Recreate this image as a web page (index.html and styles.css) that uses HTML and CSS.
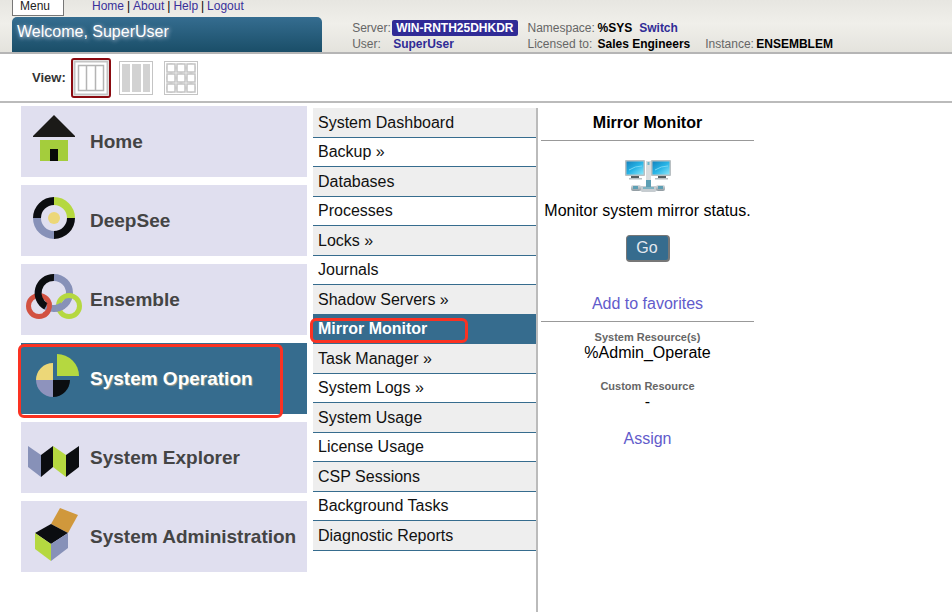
FILE: index.html
```html
<!DOCTYPE html>
<html lang="en">
<head>
<meta charset="utf-8">
<title>Management Portal</title>
<link rel="stylesheet" href="styles.css">
</head>
<body>
<header class="masthead">
  <div class="topbar">
    <button class="menu-button" type="button">Menu</button>
    <nav class="toplinks">
      <a href="#">Home</a><span class="sep">|</span><a href="#">About</a><span class="sep">|</span><a href="#">Help</a><span class="sep">|</span><a href="#">Logout</a>
    </nav>
  </div>
  <div class="banner-row">
    <h1 class="welcome">Welcome, SuperUser</h1>
    <div class="info">
      <div class="info-group info-server">
        <div class="info-line"><span class="label">Server:</span><b class="badge">WIN-RNTH25DHKDR</b></div>
        <div class="info-line"><span class="label">User:</span><b class="user">SuperUser</b></div>
      </div>
      <div class="info-group info-license">
        <div class="info-line"><span class="label">Namespace:</span><b>%SYS</b><a class="switch" href="#">Switch</a></div>
        <div class="info-line"><span class="label">Licensed to:</span><b>Sales Engineers</b></div>
      </div>
      <div class="info-group info-instance">
        <div class="info-line"><span class="label">Instance:</span><b>ENSEMBLEM</b></div>
      </div>
    </div>
  </div>
</header>

<div class="viewbar">
  <span class="view-label">View:</span>
  <button class="view-button selected" type="button" aria-label="Columns">
    <svg width="36" height="36" viewBox="0 0 36 36"><rect x="1.5" y="1.5" width="33" height="33" fill="#fff" stroke="#c4c4c4" stroke-width="2"/><rect x="5.5" y="5.5" width="25" height="25" fill="#fff" stroke="#b4b4b4" stroke-width="1.5"/><path d="M13.5 6v25M22.5 6v25" stroke="#b4b4b4" stroke-width="1.5"/></svg>
  </button>
  <button class="view-button" type="button" aria-label="List">
    <svg width="36" height="36" viewBox="0 0 36 36"><rect x="1.5" y="1.5" width="33" height="33" fill="#fff" stroke="#c4c4c4"/><path d="M4 4h8v28H4zM14 4h9v28h-9zM25 4h7v28h-7z" fill="#d2d2d2"/></svg>
  </button>
  <button class="view-button" type="button" aria-label="Icons">
    <svg width="36" height="36" viewBox="0 0 36 36"><rect x="1.5" y="1.5" width="33" height="33" fill="#fff" stroke="#c4c4c4"/><path d="M3 8h30M3 18h30M3 28h30M8 3v30M18 3v30M28 3v30" stroke="#d8d8d8" stroke-width="3"/><g fill="#fff" stroke="#c4c4c4" stroke-width="1.5"><rect x="4" y="4" width="8" height="8"/><rect x="14" y="4" width="8" height="8"/><rect x="24" y="4" width="8" height="8"/><rect x="4" y="14" width="8" height="8"/><rect x="14" y="14" width="8" height="8"/><rect x="24" y="14" width="8" height="8"/><rect x="4" y="24" width="8" height="8"/><rect x="14" y="24" width="8" height="8"/><rect x="24" y="24" width="8" height="8"/></g></svg>
  </button>
</div>

<main class="finder">
  <nav class="tiles">
    <a class="tile" href="#">
      <svg class="tile-icon" viewBox="0 0 69 71"><path d="M33 9 54 30v1H12v-1z" fill="#1b1a18"/><path d="M19 34h28v21H19z" fill="#a4cd3c"/><path d="M29 43h8v12h-8z" fill="#080a08"/></svg>
      <span>Home</span>
    </a>
    <a class="tile" href="#">
      <svg class="tile-icon" viewBox="0 0 69 71"><g fill="none" stroke-width="8"><path d="M16 33a17 17 0 0 1 17-17" stroke="#0b0d10"/><path d="M33 16a17 17 0 0 1 17 17" stroke="#b5d840"/><path d="M50 33a17 17 0 0 1-17 17" stroke="#0b0d10"/><path d="M33 50a17 17 0 0 1-17-17" stroke="#8791b8"/></g><circle cx="33" cy="33" r="6" fill="#ecd778"/></svg>
      <span>DeepSee</span>
    </a>
    <a class="tile" href="#">
      <svg class="tile-icon" viewBox="0 0 69 71"><g fill="none"><circle cx="18" cy="42" r="10.5" stroke="#d25141" stroke-width="5"/><path d="M33 13.5a15.500 15.500 0 0 1 0 31 15.500 15.500 0 0 1-8-2" stroke="#8791b8" stroke-width="7"/><path d="M33 13.5a15.500 15.500 0 0 0-8 29" stroke="#0b0d10" stroke-width="7"/><path d="M28 39a10.500 10.500 0 0 1-5 12" stroke="#d25141" stroke-width="5"/><circle cx="48" cy="42" r="10.5" stroke="#b5d840" stroke-width="5"/><path d="M35 44.400a15.500 15.500 0 0 0 7-3.200" stroke="#8791b8" stroke-width="7"/></g></svg>
      <span>Ensemble</span>
    </a>
    <a class="tile current" href="#" aria-current="true">
      <svg class="tile-icon" viewBox="0 0 69 71"><path d="M36 33V11a22 22 0 0 1 22 22z" fill="#b5d840"/><path d="M32 37H15a17 17 0 0 1 17-17z" fill="#ecd778"/><path d="M32 37v17a17 17 0 0 1-17-17z" fill="#8e93bd"/><path d="M32 37h17a17 17 0 0 1-17 17z" fill="#0b0d10"/></svg>
      <span>System Operation</span>
      <i class="ring ring-tile"></i>
    </a>
    <a class="tile" href="#">
      <svg class="tile-icon" viewBox="0 0 69 71"><path d="m7 24 13 9v22L7 45z" fill="#8791b8"/><path d="m20 33 12-9v21L20 55z" fill="#0b0d10"/><path d="m32 24 13 9v22L32 45z" fill="#b5d840"/><path d="m45 33 13-9v21L45 55z" fill="#0b0d10"/></svg>
      <span>System Explorer</span>
    </a>
    <a class="tile" href="#">
      <svg class="tile-icon" viewBox="0 0 69 71"><path d="m30 23 9-16 18 7-10 18z" fill="#d0983c"/><path d="m14 32 16-9 17 9-17 11z" fill="#0b0d10"/><path d="m14 32 16 11v17L14 48z" fill="#b5d840"/><path d="M47 32 30 43v17l17-13z" fill="#8791b8"/></svg>
      <span>System Administration</span>
    </a>
  </nav>

  <nav class="submenu">
    <a href="#">System Dashboard</a>
    <a href="#">Backup »</a>
    <a href="#">Databases</a>
    <a href="#">Processes</a>
    <a href="#">Locks »</a>
    <a href="#">Journals</a>
    <a href="#">Shadow Servers »</a>
    <a class="current" href="#" aria-current="true">Mirror Monitor<i class="ring ring-item"></i></a>
    <a href="#">Task Manager »</a>
    <a href="#">System Logs »</a>
    <a href="#">System Usage</a>
    <a href="#">License Usage</a>
    <a href="#">CSP Sessions</a>
    <a href="#">Background Tasks</a>
    <a href="#">Diagnostic Reports</a>
  </nav>

  <section class="detail">
    <h2>Mirror Monitor</h2>
    <hr>
    <svg class="detail-icon" width="48" height="35" viewBox="0 0 48 35">
      <defs>
        <linearGradient id="screen" x1="0" y1="0" x2="1" y2="1"><stop offset="0" stop-color="#1583be"/><stop offset=".5" stop-color="#27b4e6"/><stop offset="1" stop-color="#8be6fa"/></linearGradient>
        <linearGradient id="pipe" x1="0" y1="0" x2="0" y2="1"><stop offset="0" stop-color="#d8dde0"/><stop offset="1" stop-color="#8e999f"/></linearGradient>
      </defs>
      <path d="M22 2h5v22h-5z" fill="#d9dcde"/><path d="M23.5 3h2v3h-2z" fill="#6cb4c8"/>
      <rect x="1" y="1" width="20" height="16" rx="1" fill="#b9c0c3"/><rect x="2.5" y="2.5" width="17" height="13" fill="url(#screen)"/>
      <rect x="27" y="1" width="20" height="16" rx="1" fill="#b9c0c3"/><rect x="28.5" y="2.5" width="17" height="13" fill="url(#screen)"/>
      <path d="M5 11q6-4 13-4M31 11q6-4 13-4" fill="none" stroke="#75d5f3"/>
      <path d="M7 17h8v2H7zM34 17h8v2h-8z" fill="#555e62"/><path d="M5 19h13v1.500H5zM31 19h13v1.500H31z" fill="#b8bec1"/>
      <path d="M17 27h15l3 3-4 3H18l-4-3z" fill="#c6ccd0"/>
      <rect x="7" y="26" width="10" height="6" rx="2" fill="url(#pipe)"/><rect x="32" y="26" width="9" height="6" rx="2" fill="url(#pipe)"/>
      <path d="M9 27h5v3H9zM34 27h5v3h-5zM22 21h5v8h-5z" fill="#5d9fb4"/><path d="M19 28h11v2H19z" fill="#7fb3c2"/>
    </svg>
    <p class="summary">Monitor system mirror status.</p>
    <button class="go" type="button">Go</button>
    <a class="favorite" href="#">Add to favorites</a>
    <hr>
    <h3>System Resource(s)</h3>
    <p>%Admin_Operate</p>
    <h3 class="custom">Custom Resource</h3>
    <p>-</p>
    <a class="assign" href="#">Assign</a>
  </section>
</main>
</body>
</html>
```
FILE: styles.css
```css
* {
  box-sizing: border-box;
}

body {
  display: flex;
  flex-direction: column;
  min-height: 100vh;
  margin: 0;
  background: #fff;
  color: #000;
  font: 16px/18px "Liberation Sans", Arial, sans-serif;
}

a {
  text-decoration: none;
}

h1, h2, h3, p {
  margin: 0;
}

/* Masthead */
.masthead {
  padding-left: 12px;
  border-bottom: 2px solid #b5b5b5;
  background: linear-gradient(#e7e6e1, #f0efea 45%, #e4e3dd);
  font-size: 12px;
}

.topbar {
  display: flex;
  align-items: flex-start;
  gap: 28px;
  height: 17px;
}

.menu-button {
  width: 52px;
  height: 16px;
  padding: 0 0 4px 7px;
  border: 1px solid #777;
  border-top: 0;
  background: #fff;
  color: #222;
  font: 12px/12px "Liberation Sans", Arial, sans-serif;
  text-align: left;
}

.toplinks {
  display: flex;
  line-height: 12px;
}

.toplinks a {
  color: #39309a;
}

.sep {
  width: 9px;
  text-align: center;
}

.banner-row {
  display: flex;
  gap: 30px;
}

.welcome {
  flex: 0 1 33%;
  height: 35px;
  padding: 6px 5px;
  border-radius: 5px 5px 0 0;
  background: linear-gradient(#356d90, #1a4e68);
  color: #fff;
  font-size: 16px;
  font-weight: normal;
  line-height: 18px;
  text-shadow: 1px 1px 4px #dde;
}

.info {
  display: flex;
  flex: 1;
  padding-top: 3px;
  white-space: nowrap;
}

.info-line {
  display: flex;
  gap: 2px;
  height: 16px;
  line-height: 16px;
}

.info-server {
  margin-right: 10px;
}

.info-server .label {
  width: 38px;
}

.info-license .label {
  width: 68px;
}

.info-instance {
  padding-top: 16px;
  margin-left: 15px;
}

.info-instance .label {
  width: 49px;
}

.label {
  color: #666;
}

.badge {
  padding: 0 4px;
  border-radius: 2px;
  background: #302b96;
  color: #fff;
}

.user {
  padding-left: 1px;
}

.user, .switch {
  color: #302b96;
}

.switch {
  margin-left: 5px;
  font-weight: bold;
}

/* View selector */
.viewbar {
  display: flex;
  align-items: center;
  gap: 5px;
  height: 49px;
  padding-left: 32px;
  border-bottom: 2px solid #bbb;
}

.view-label {
  color: #333;
  font-size: 13px;
  font-weight: bold;
}

.view-button {
  display: flex;
  width: 40px;
  height: 40px;
  padding: 0;
  border: 2px solid transparent;
  border-radius: 3px;
  background: none;
}

.view-button.selected {
  border-color: #8b0a10;
}

/* Three-pane finder */
.finder {
  display: grid;
  flex: 1;
  grid-template-columns: 292fr 225fr 414fr;
  padding-left: 21px;
}

.tiles {
  display: flex;
  flex-direction: column;
  gap: 8px;
  padding: 3px 6px 3px 0;
}

.tile {
  position: relative;
  display: flex;
  align-items: center;
  height: 71px;
  background: #e0dfef;
  color: #444;
  font-size: 19px;
  font-weight: bold;
  white-space: nowrap;
}

.tile-icon {
  width: 69px;
  height: 71px;
}

.tile.current {
  background: #366c8e;
  color: #fff;
  text-shadow: 1px 1px 1px #998;
}

.ring {
  position: absolute;
  border: 3px solid #fb3222;
  border-radius: 6px;
}

.ring-tile {
  top: 1px;
  right: 24px;
  bottom: -4px;
  left: -3px;
}

.ring-item {
  top: 3px;
  right: 68px;
  bottom: 0;
  left: -3px;
}

.submenu {
  margin-top: 5px;
  border-right: 2px solid #bbb;
}

.submenu a {
  position: relative;
  display: block;
  height: 29px;
  padding: 0 5px;
  border-bottom: 1px solid #366c8e;
  color: #111;
  line-height: 28px;
}

.submenu a:nth-child(odd) {
  height: 30px;
  background: #eee;
  line-height: 29px;
}

.submenu a.current {
  background: #366c8e;
  color: #fff;
  font-weight: bold;
}

/* Detail pane */
.detail {
  display: flex;
  flex-direction: column;
  align-items: center;
  max-width: 216px;
  padding: 11px 0 0 3px;
  text-align: center;
}

.detail h2 {
  font-size: 16px;
}

.detail hr {
  width: 100%;
  height: 1px;
  margin: 8px 0 0;
  border: 0;
  background: #999;
}

.detail-icon {
  margin-top: 18px;
}

.summary {
  margin-top: 8px;
}

.go {
  width: 44px;
  height: 27px;
  margin-top: 15px;
  padding: 0;
  border: 1px solid #777;
  border-width: 1px 2px 2px 1px;
  border-radius: 4px;
  background: #366c8e;
  color: #e4e8ee;
  font: 16px/18px "Liberation Sans", Arial, sans-serif;
}

.favorite, .assign {
  color: #625bcb;
}

.favorite {
  margin-top: 33px;
}

.detail h3 {
  margin-top: 8px;
  color: #666;
  font-size: 11px;
  line-height: 14px;
}

.detail .custom {
  margin-top: 17px;
}

.assign {
  margin-top: 19px;
}
```
